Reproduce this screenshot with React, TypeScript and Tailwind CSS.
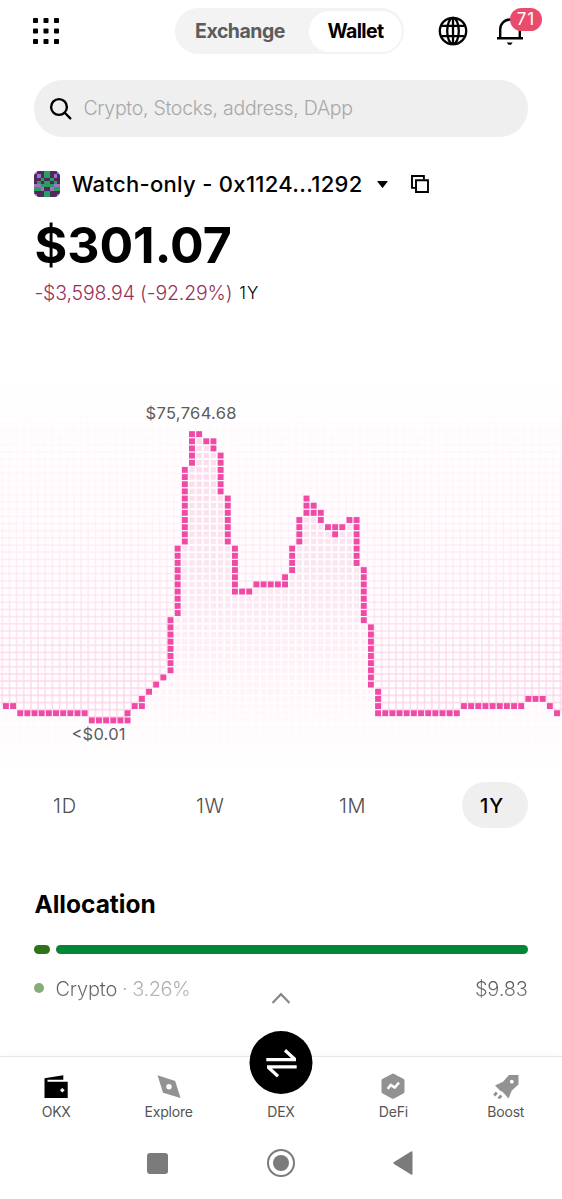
import React from "react";

// [lowest row, highest row] for every column, rows are counted from the bottom
const columns: [number, number][] = [
  [2, 2], [2, 2],
  [1, 1], [1, 1], [1, 1], [1, 1], [1, 1], [1, 1], [1, 1], [1, 1], [1, 1], [1, 1],
  [0, 0], [0, 0], [0, 0], [0, 0], [0, 0], [0, 1],
  [2, 2], [2, 3], [4, 4], [5, 5], [6, 6], [7, 14], [15, 24], [25, 35],
  [36, 40], [40, 40], [39, 39], [38, 39], [32, 37], [25, 31], [18, 24],
  [18, 18], [18, 18], [19, 19], [19, 19], [19, 19], [19, 19], [19, 20],
  [21, 24], [25, 28], [29, 31], [29, 30], [28, 29], [27, 27], [26, 27], [27, 27],
  [28, 28], [22, 28], [14, 21], [5, 13], [1, 4],
  [1, 1], [1, 1], [1, 1], [1, 1], [1, 1], [1, 1], [1, 1], [1, 1], [1, 1], [1, 1], [1, 1],
  [2, 2], [2, 2], [2, 2], [2, 2], [2, 2], [2, 2], [2, 2], [2, 2], [2, 2],
  [3, 3], [3, 3], [3, 3], [2, 2], [1, 1],
];

const STEP = 7.157;
const LEFT = 5.9;
const BOTTOM = 340.4;

const colX = (c: number) => LEFT + c * STEP;
const rowY = (r: number) => BOTTOM - r * STEP;

const Chart = () => {
  const line = columns
    .map(([low, high], c) => `${colX(c)},${rowY((low + high) / 2)}`)
    .join(" L");
  const area = `M0,390 L0,${rowY(2)} L${line} L562,${rowY(1)} L562,390 Z`;
  const above = `M0,0 L0,${rowY(2)} L${line} L562,${rowY(1)} L562,0 Z`;

  return (
    <svg className="block h-[390px] w-full" viewBox="0 0 562 390">
      <defs>
        <pattern id="cells" x={LEFT - STEP / 2} y={BOTTOM - STEP / 2} width={STEP} height={STEP} patternUnits="userSpaceOnUse">
          <rect x="0.9" y="0.9" width="5.3" height="5.3" fill="#fff" />
        </pattern>
        <pattern id="lines" x={LEFT - STEP / 2} y={BOTTOM - STEP / 2} width={STEP} height={STEP} patternUnits="userSpaceOnUse">
          <path d={`M0,0 H${STEP} M0,${STEP} H${STEP} M0,0 V${STEP} M${STEP},0 V${STEP}`} stroke="#fff" strokeWidth="1.2" />
        </pattern>
        <linearGradient id="fadeUp" x1="0" y1="0" x2="0" y2="340" gradientUnits="userSpaceOnUse">
          <stop offset="0" stopColor="#f9a8d4" stopOpacity="0" />
          <stop offset="0.4" stopColor="#f9a8d4" stopOpacity="0.14" />
          <stop offset="1" stopColor="#f9a8d4" stopOpacity="0.55" />
        </linearGradient>
        <linearGradient id="fadeDown" x1="0" y1="50" x2="0" y2="390" gradientUnits="userSpaceOnUse">
          <stop offset="0" stopColor="#f9c3e0" stopOpacity="0.6" />
          <stop offset="0.5" stopColor="#f9c3e0" stopOpacity="0.36" />
          <stop offset="0.85" stopColor="#f9c3e0" stopOpacity="0.06" />
          <stop offset="1" stopColor="#f9c3e0" stopOpacity="0" />
        </linearGradient>
        <linearGradient id="haze" x1="0" y1="0" x2="0" y2="1">
          <stop offset="0" stopColor="#fff" />
          <stop offset="0.3" stopColor="#fffdfe" />
          <stop offset="0.85" stopColor="#fffdfe" />
          <stop offset="1" stopColor="#fff" />
        </linearGradient>
        <mask id="cellMask">
          <rect width="562" height="390" fill="url(#cells)" />
        </mask>
        <mask id="lineMask">
          <rect width="562" height="390" fill="url(#lines)" />
        </mask>
      </defs>

      <rect width="562" height="390" fill="url(#haze)" />
      <g mask="url(#lineMask)">
        <path d={above} fill="url(#fadeUp)" />
      </g>
      <g mask="url(#cellMask)">
        <path d={area} fill="url(#fadeDown)" />
      </g>

      {columns.map(([low, high], c) =>
        Array.from({ length: high - low + 1 }, (_, i) => (
          <rect
            key={`${c}-${i}`}
            x={colX(c) - 2.95}
            y={rowY(low + i) - 2.95}
            width="5.9"
            height="5.9"
            fill="#ee4aa6"
          />
        ))
      )}

      <text x="145.5" y="38.5" fontSize="16.5" fill="#5c5c5c" textLength="91">
        $75,764.68
      </text>
      <text x="71.5" y="360" fontSize="16.5" fill="#5c5c5c" textLength="54">
        &lt;$0.01
      </text>
    </svg>
  );
};

const avatarRows = [
  "lppggppl",
  "plpggplp",
  "ppgppgpp",
  "pgpggpgp",
  "llggggll",
  "gglpplgg",
  "pppggppp",
  "lppggppl",
];

const avatarColors: Record<string, string> = {
  p: "#4b2a5e",
  g: "#2a9d60",
  l: "#a571c4",
};

const Avatar = () => (
  <svg className="size-[26px] overflow-hidden rounded-[5px]" viewBox="0 0 8 8" shapeRendering="crispEdges">
    {avatarRows.map((row, y) =>
      row.split("").map((cell, x) => (
        <rect key={`${x}-${y}`} x={x} y={y} width="1" height="1" fill={avatarColors[cell]} />
      ))
    )}
  </svg>
);

const Header = () => (
  <header className="flex h-[62px] items-center pl-[33px]">
    <svg className="size-[26px]" viewBox="0 0 26 26">
      {[0, 10.5, 21].map((y) =>
        [0, 10.5, 21].map((x) => (
          <rect key={`${x}-${y}`} x={x} y={y} width="5" height="5" rx="0.8" />
        ))
      )}
    </svg>
    <div className="ml-[116px] flex h-[46px] w-[229px] items-center rounded-full bg-[#f3f3f3] p-[2px] text-[19.5px] font-bold">
      <div className="flex-1 pt-[2px] pr-1.5 text-center tracking-[-0.5px] text-[#5c5c5c]">Exchange</div>
      <div className="flex h-[41px] w-[93px] items-center justify-center rounded-full bg-white pt-[2px] tracking-[-0.6px]">
        Wallet
      </div>
    </div>
    <svg className="ml-[34px] size-[30px]" viewBox="0 0 30 30" fill="none" stroke="#000" strokeWidth="2.3">
      <circle cx="15" cy="15" r="13.2" />
      <ellipse cx="15" cy="15" rx="5.8" ry="13.2" />
      <path d="M15 2V28M3.6 9.8H26.4M3.6 20.2H26.4" />
    </svg>
    <div className="relative ml-[28px] size-[28px]">
      <svg className="size-[28px]" viewBox="0 0 28 28">
        <path d="M4.2 21V12.3a9.8 9.8 0 0 1 19.6 0V21M1 21.3H27" fill="none" stroke="#000" strokeWidth="2.4" />
        <path d="M10.7 25.4h6l-1.8 2.3h-2.4z" />
      </svg>
      <span className="absolute -top-[9px] left-[14px] flex h-[23px] w-[32px] items-center justify-center rounded-full bg-[#e84b6c] pt-px text-[17px] tracking-[1px] text-white">
        71
      </span>
    </div>
  </header>
);

const Wallet = () => (
  <section className="px-[34.4px]">
    <div className="mt-[18px] flex h-[57px] items-center rounded-full bg-[#efefef] pl-[14.4px]">
      <svg className="size-6" viewBox="0 0 24 24" fill="none" stroke="#000" strokeWidth="2.4" strokeLinecap="round">
        <circle cx="10" cy="10" r="7.9" />
        <path d="M16 16l5.3 5.3" />
      </svg>
      <span className="ml-[10.6px] text-[19.5px] font-light tracking-[-0.28px] text-[#a8a8a8]">
        Crypto, Stocks, address, DApp
      </span>
    </div>
    <div className="mt-[34px] flex h-[26px] items-center">
      <Avatar />
      <span className="ml-[11px] pt-px text-[22px] font-medium tracking-[0.3px] whitespace-nowrap">
        Watch-only - 0x1124...1292
      </span>
      <svg className="ml-[14.5px] h-[7px] w-[11px]" viewBox="0 0 11 7">
        <path d="M0.8 0h9.4q.8 0 .3.7L6 6.6q-.5.6-1 0L.5.7Q0 0 .8 0z" />
      </svg>
      <svg className="ml-[23px] size-[18px]" viewBox="0 0 18 18" fill="none" stroke="#000" strokeWidth="1.9">
        <path d="M5 5.2h12v11.8H5z" />
        <path d="M4.5 12.9H1V1H12.9V4.5" />
      </svg>
    </div>
    <div className="mt-[18px] text-[50px] leading-[60px] font-bold">$301.07</div>
    <div className="mt-[3px] flex items-center leading-[30px]">
      <span className="text-[19.5px] font-light tracking-[-0.15px] text-[#98305a]">-$3,598.94 (-92.29%)</span>
      <span className="ml-[7px] text-[17px] font-light tracking-[0.9px]">1Y</span>
    </div>
  </section>
);

const Periods = () => (
  <div className="mt-3 flex h-[46px] items-center justify-between pr-[34px] pl-[32px] text-[20px] font-light tracking-[0.8px] text-[#4c4c4c]">
    <span className="w-[66px] pt-px text-center">1D</span>
    <span className="w-[66px] pt-px pl-[4px] text-center">1W</span>
    <span className="w-[66px] pt-px pl-[2px] text-center">1M</span>
    <span className="flex h-full w-[66px] items-center justify-center rounded-full bg-[#efefef] pt-px pr-1.5 font-medium text-black">
      1Y
    </span>
  </div>
);

const Allocation = () => (
  <section className="h-[228px] px-[34.4px] pt-[61px]">
    <h2 className="text-[24.5px] leading-[30px] font-bold">Allocation</h2>
    <div className="mt-[26px] flex h-[9px] gap-[6px]">
      <div className="w-[15.6px] rounded-full bg-[#2f7318]" />
      <div className="flex-1 rounded-full bg-[#048639]" />
    </div>
    <div className="mt-[20px] flex h-[30px] items-center text-[20px] font-light tracking-[-0.2px]">
      <span className="-mt-[2px] size-[10px] rounded-full bg-[#84ad78]" />
      <span className="ml-[11px] bg-linear-to-b from-[#444] to-[#888] bg-clip-text text-transparent">Crypto</span>
      <span className="ml-[5px] bg-linear-to-b from-[#999] to-[#c4c4c4] bg-clip-text tracking-[-0.5px] text-transparent">
        · 3.26%
      </span>
      <span className="ml-auto bg-linear-to-b from-[#444] to-[#888] bg-clip-text text-transparent">$9.83</span>
    </div>
    <svg className="mx-auto -mt-[12px] h-3 w-5" viewBox="0 0 20 12" fill="none" stroke="#888" strokeWidth="2.2">
      <path d="M1.5 11L10 2.2L18.5 11" />
    </svg>
  </section>
);

const WalletIcon = () => (
  <svg className="size-[26px]" viewBox="0 0 26 26">
    <path d="M1.5 5.2L20.3 2.2V6.8H4.5V8.7H24.7V25H1.5z" />
    <path d="M19.3 15.2l2 2-2 2-2-2z" fill="#fff" stroke="#fff" strokeWidth="0.6" />
  </svg>
);

const CompassIcon = () => (
  <svg className="size-[26px]" viewBox="0 0 26 26" fill="#929292">
    <path d="M1.5 2.3L19.2 8L24.5 25L7 19.7z" />
    <circle cx="13" cy="13.7" r="2.7" fill="#fff" />
  </svg>
);

const DefiIcon = () => (
  <svg className="size-[26px]" viewBox="0 0 26 26" fill="#929292">
    <path d="M11.8 0.9Q13 0.3 14.2 0.9L23.3 5.8Q24.5 6.5 24.5 7.8V18.4Q24.5 19.7 23.3 20.4L14.2 25.4Q13 26 11.8 25.4L2.7 20.4Q1.5 19.7 1.5 18.4V7.8Q1.5 6.5 2.7 5.8z" />
    <path d="M7.7 15.9L10.8 12L14.7 14.5L19 9.7" fill="none" stroke="#fff" strokeWidth="2.5" />
  </svg>
);

const RocketIcon = () => (
  <svg className="size-[26px]" viewBox="0 0 26 26" fill="#929292">
    <path d="M16 2H25.5V11.5L18.8 17.4L15.5 25.5L10 19.2L7 17.5L2 12.5L10 8.8z" />
    <circle cx="18.8" cy="8.7" r="1.9" fill="#fff" />
    <path d="M1.2 22.5L3.8 19.5M5.5 25.5L8.4 22.5" fill="none" stroke="#929292" strokeWidth="2.7" />
  </svg>
);

const navItems = [
  { label: "OKX", icon: <WalletIcon /> },
  { label: "Explore", icon: <CompassIcon /> },
  { label: "DEX", icon: null },
  { label: "DeFi", icon: <DefiIcon /> },
  { label: "Boost", icon: <RocketIcon /> },
];

const BottomNav = () => (
  <nav className="relative h-[75px] border-t border-[#e6e6e6] bg-white shadow-[0_-3px_5px_rgba(0,0,0,0.018)]">
    <div className="grid grid-cols-5 pt-[15.5px]">
      {navItems.map((item) => (
        <div key={item.label} className="flex flex-col items-center text-[14px] leading-[20px] tracking-[-0.2px] text-[#555]">
          <div className="mb-[3.5px] h-[26px]">{item.icon}</div>
          {item.label}
        </div>
      ))}
    </div>
    <button className="absolute -top-[26px] left-1/2 flex size-[63px] -translate-x-1/2 items-center justify-center rounded-full bg-black">
      <svg className="h-[30px] w-[32px]" viewBox="0 0 32 30" fill="none" stroke="#fff" strokeWidth="3.2">
        <path d="M0.8 11.6H30.5M19.5 2.2L29.3 11.2" />
        <path d="M31.2 18.8H1.5M12.5 28.2L2.7 19.2" />
      </svg>
    </button>
  </nav>
);

const SystemBar = () => (
  <div className="flex h-[67px] items-center justify-between bg-white pr-[149px] pb-[3px] pl-[147px]">
    <span className="size-[21px] rounded-[3px] bg-[#7b7b7b]" />
    <span className="flex size-[28px] items-center justify-center rounded-full border-2 border-[#7b7b7b]">
      <span className="size-[16px] rounded-full bg-[#7b7b7b]" />
    </span>
    <svg className="h-6 w-5" viewBox="0 0 20 24" fill="#7b7b7b">
      <path d="M18 0.4Q19.5-.3 19.5 1.4V22.6Q19.5 24.3 18 23.6L1 13Q-.3 12 1 11z" />
    </svg>
  </div>
);

const App: React.FC = () => {
  return (
    <main className="h-[1199px] w-[562px] overflow-hidden bg-white font-['Inter',sans-serif] text-black">
      <Header />
      <Wallet />
      <div className="mt-[72px]">
        <Chart />
      </div>
      <Periods />
      <Allocation />
      <BottomNav />
      <SystemBar />
    </main>
  );
};

export default App;
